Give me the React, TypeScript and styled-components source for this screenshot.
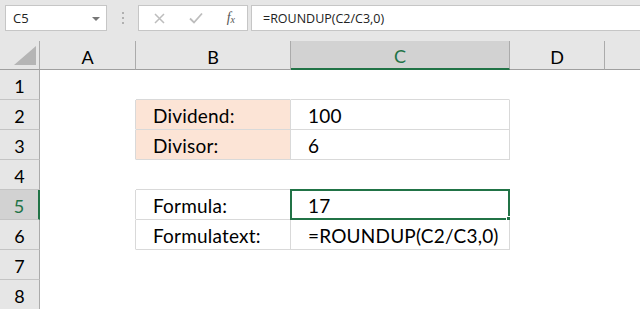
import styled, { createGlobalStyle } from 'styled-components';

const GlobalStyle = createGlobalStyle`
  html, body {
    margin: 0;
    padding: 0;
    background: #ffffff;
  }
  body {
    width: 640px;
    height: 309px;
    overflow: hidden;
    font-family: Lato, "Liberation Sans", sans-serif;
  }
`;

const GREEN = '#217346';

const columns = ['A', 'B', 'C', 'D', ''];
const activeCol = 'C';
const activeRow = 5;

type Cell = { text?: string; fill?: boolean; right?: boolean; bottom?: boolean; selected?: boolean };

// B and C only; A, D, E stay empty, A gets a right border where the table starts
const data: Record<number, { b?: Cell; c?: Cell }> = {
  1: { b: { bottom: true }, c: { bottom: true } },
  2: { b: { text: 'Dividend:', fill: true, right: true, bottom: true }, c: { text: '100', right: true, bottom: true } },
  3: { b: { text: 'Divisor:', fill: true, right: true, bottom: true }, c: { text: '6', right: true, bottom: true } },
  4: { b: { bottom: true }, c: { bottom: true } },
  5: { b: { text: 'Formula:', right: true, bottom: true }, c: { text: '17', right: true, bottom: true, selected: true } },
  6: { b: { text: 'Formulatext:', right: true, bottom: true }, c: { text: '=ROUNDUP(C2/C3,0)', right: true, bottom: true } },
  7: {},
  8: {},
};

const tableRows = [2, 3, 5, 6];

function App() {
  return (
    <>
      <GlobalStyle />
      <Toolbar>
        <NameBox>
          <span>C5</span>
          <DropArrow />
        </NameBox>
        <Grip>
          <i />
          <i />
          <i />
        </Grip>
        <FormulaButtons>
          <svg width="11" height="11" viewBox="0 0 11 11">
            <path d="M1 1 L10 10 M10 1 L1 10" stroke="#bdbdbd" strokeWidth="1.5" fill="none" />
          </svg>
          <svg width="14" height="12" viewBox="0 0 14 12">
            <path d="M1 6.5 L5 10.5 L13 1.5" stroke="#bdbdbd" strokeWidth="1.8" fill="none" />
          </svg>
          <FxLabel>
            f<sub>x</sub>
          </FxLabel>
        </FormulaButtons>
        <FormulaInput>=ROUNDUP(C2/C3,0)</FormulaInput>
      </Toolbar>
      <Sheet>
        <Corner>
          <svg width="22" height="19" viewBox="0 0 22 19">
            <path d="M22 0 L22 19 L0 19 Z" fill="#b5b5b5" />
          </svg>
        </Corner>
        {columns.map((col, i) => (
          <ColHeader key={i} active={col === activeCol} last={i === columns.length - 1}>
            {col}
          </ColHeader>
        ))}
        {[1, 2, 3, 4, 5, 6, 7, 8].map(row => {
          const r = data[row] || {};
          return [
            <RowHeader key={`h${row}`} active={row === activeRow}>
              {row}
            </RowHeader>,
            <Cell key={`a${row}`} right={tableRows.includes(row)} />,
            <Cell key={`b${row}`} fill={r.b?.fill} right={r.b?.right} bottom={r.b?.bottom}>
              {r.b?.text}
            </Cell>,
            <Cell key={`c${row}`} right={r.c?.right} bottom={r.c?.bottom}>
              {r.c?.text}
              {r.c?.selected && (
                <Selection>
                  <FillHandle />
                </Selection>
              )}
            </Cell>,
            <Cell key={`d${row}`} />,
            <Cell key={`e${row}`} />,
          ];
        })}
      </Sheet>
    </>
  );
}

export default App;

const Toolbar = styled.div`
  display: flex;
  align-items: flex-start;
  height: 41px;
  padding: 5px 0 0 5px;
  box-sizing: border-box;
  background: #e6e6e6;
  font-family: "Open Sans", "Liberation Sans", sans-serif;
  font-size: 12.5px;
  color: #222;
`;

const NameBox = styled.div`
  display: flex;
  align-items: center;
  justify-content: space-between;
  width: 102px;
  height: 26px;
  box-sizing: border-box;
  padding: 0 6px 0 7px;
  background: #fff;
  border: 1px solid #c6c6c6;
  font-size: 13px;
`;

const DropArrow = styled.span`
  width: 0;
  height: 0;
  border-left: 4px solid transparent;
  border-right: 4px solid transparent;
  border-top: 4px solid #777;
  margin-top: 1px;
`;

const Grip = styled.div`
  display: flex;
  flex-direction: column;
  gap: 3px;
  width: 31px;
  height: 26px;
  align-items: center;
  justify-content: center;

  i {
    width: 2px;
    height: 2px;
    background: #b0b0b0;
  }
`;

const FormulaButtons = styled.div`
  display: flex;
  align-items: center;
  justify-content: space-between;
  width: 110px;
  height: 26px;
  box-sizing: border-box;
  padding: 0 12px 0 15px;
  background: #fff;
  border: 1px solid #c6c6c6;
`;

const FxLabel = styled.span`
  font-family: "Liberation Serif", serif;
  font-style: italic;
  font-size: 14px;
  color: #555;
  line-height: 1;

  sub {
    font-size: 10px;
    vertical-align: -1px;
  }
`;

const FormulaInput = styled.div`
  display: flex;
  align-items: center;
  flex: 1;
  height: 26px;
  margin-left: 3px;
  box-sizing: border-box;
  padding-left: 11px;
  background: #fff;
  border: 1px solid #c6c6c6;
  border-right: none;
`;

const Sheet = styled.div`
  display: grid;
  grid-template-columns: 40px 96px 155px 219px 95px 1fr;
  grid-template-rows: 29px;
  grid-auto-rows: 30px;
  background: #fff;
`;

const HeaderBase = styled.div`
  box-sizing: border-box;
  display: flex;
  align-items: center;
  justify-content: center;
  font-size: 18px;
  color: #000;
`;

const Corner = styled(HeaderBase)`
  background: #e6e6e6;
  border-right: 1px solid #ababab;
  border-bottom: 1px solid #9f9f9f;
  align-items: flex-end;
  justify-content: flex-end;
  padding: 0 3px 4px 0;
`;

const ColHeader = styled(HeaderBase)<{ active?: boolean; last?: boolean }>`
  padding-top: 3px;
  background: ${p => (p.active ? '#d2d2d2' : '#e6e6e6')};
  color: ${p => (p.active ? GREEN : '#000')};
  border-right: ${p => (p.last ? 'none' : '1px solid #ababab')};
  border-bottom: ${p => (p.active ? `2px solid ${GREEN}` : '1px solid #9f9f9f')};
`;

const RowHeader = styled(HeaderBase)<{ active?: boolean }>`
  padding-top: 2px;
  background: ${p => (p.active ? '#d2d2d2' : '#e6e6e6')};
  color: ${p => (p.active ? GREEN : '#000')};
  border-bottom: 1px solid #c4c4c4;
  border-right: ${p => (p.active ? `2px solid ${GREEN}` : '1px solid #ababab')};
`;

const Cell = styled.div<{ fill?: boolean; right?: boolean; bottom?: boolean }>`
  position: relative;
  box-sizing: border-box;
  display: flex;
  align-items: center;
  padding: 2px 0 0 17px;
  font-size: 19px;
  letter-spacing: 0.2px;
  color: #000;
  white-space: nowrap;
  background: ${p => (p.fill ? '#fce4d6' : '#fff')};
  border-right: 1px solid ${p => (p.right ? '#d9d9d9' : '#fff')};
  border-bottom: 1px solid ${p => (p.bottom ? '#d9d9d9' : '#fff')};
`;

const Selection = styled.div`
  position: absolute;
  inset: -1px -1px -1px -1px;
  border: 2px solid ${GREEN};
  pointer-events: none;
`;

const FillHandle = styled.div`
  position: absolute;
  right: -4px;
  bottom: -4px;
  width: 5px;
  height: 5px;
  background: ${GREEN};
  border-left: 1px solid #fff;
  border-top: 1px solid #fff;
`;
